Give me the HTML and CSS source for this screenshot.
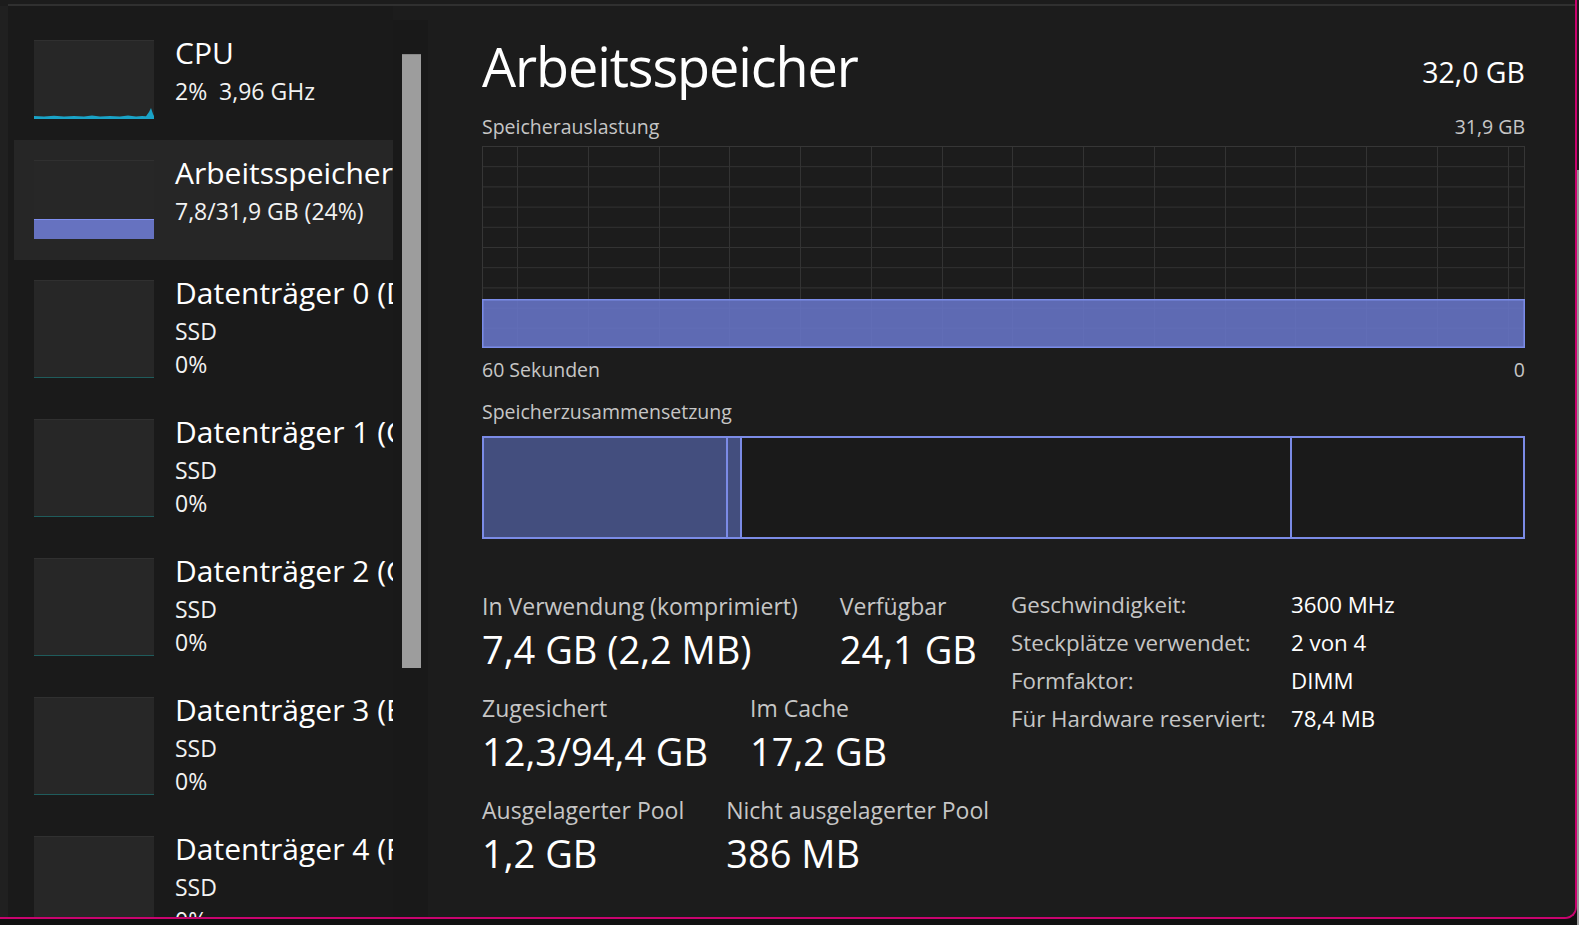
FILE: index.html
```html
<!DOCTYPE html>
<html lang="de">
<head>
<meta charset="utf-8">
<title>Task-Manager – Leistung</title>
<link rel="stylesheet" href="styles.css">
</head>
<body>
<div class="screen">
  <div class="window">
    <div class="topbar"><div class="topline"></div></div>
    <div class="body">
      <div class="leftstrip"></div>
      <nav class="sidebar">
        <div class="item item-short">
          <div class="thumb thumb-short">
            <svg class="cpu-graph" viewBox="0 0 120 79" width="120" height="79">
              <path d="M0 79 L0 76 L10 76.5 L20 75.8 L30 76.6 L40 76 L50 76.4 L58 75.4 L66 76.4 L76 76 L86 76.4 L94 75.6 L102 76.4 L108 76 L112 76.2 L115 72 L117 68 L119 74 L120 76 L120 79 Z" fill="#1aa3c7"/>
            </svg>
          </div>
          <div class="info">
            <div class="name">CPU</div>
            <div class="sub">2%&nbsp; 3,96 GHz</div>
          </div>
        </div>
        <div class="item item-short selected">
          <div class="thumb thumb-short">
            <div class="mem-fill"></div>
          </div>
          <div class="info">
            <div class="name">Arbeitsspeicher</div>
            <div class="sub">7,8/31,9 GB (24%)</div>
          </div>
        </div>
        <div class="item item-tall">
          <div class="thumb thumb-tall disk"></div>
          <div class="info">
            <div class="name">Datenträger 0 (D:)</div>
            <div class="sub">SSD</div>
            <div class="sub">0%</div>
          </div>
        </div>
        <div class="item item-tall">
          <div class="thumb thumb-tall disk"></div>
          <div class="info">
            <div class="name">Datenträger 1 (C:)</div>
            <div class="sub">SSD</div>
            <div class="sub">0%</div>
          </div>
        </div>
        <div class="item item-tall">
          <div class="thumb thumb-tall disk"></div>
          <div class="info">
            <div class="name">Datenträger 2 (G:)</div>
            <div class="sub">SSD</div>
            <div class="sub">0%</div>
          </div>
        </div>
        <div class="item item-tall">
          <div class="thumb thumb-tall disk"></div>
          <div class="info">
            <div class="name">Datenträger 3 (E:)</div>
            <div class="sub">SSD</div>
            <div class="sub">0%</div>
          </div>
        </div>
        <div class="item item-tall">
          <div class="thumb thumb-tall disk"></div>
          <div class="info">
            <div class="name">Datenträger 4 (F:)</div>
            <div class="sub">SSD</div>
            <div class="sub">0%</div>
          </div>
        </div>
      </nav>
      <div class="track"><div class="scroll-thumb"></div></div>
      <main class="main">
        <header class="header">
          <h1 class="title">Arbeitsspeicher</h1>
          <div class="total">32,0 GB</div>
        </header>
        <div class="label-row label-row-top">
          <span>Speicherauslastung</span>
          <span>31,9 GB</span>
        </div>
        <svg class="graph" viewBox="0 0 1043 202" width="1043" height="202">
          <g stroke="#333333" stroke-width="1">
            <line x1="0" y1="20.7" x2="1043" y2="20.7"/>
            <line x1="0" y1="40.9" x2="1043" y2="40.9"/>
            <line x1="0" y1="61.1" x2="1043" y2="61.1"/>
            <line x1="0" y1="81.3" x2="1043" y2="81.3"/>
            <line x1="0" y1="101.5" x2="1043" y2="101.5"/>
            <line x1="0" y1="121.7" x2="1043" y2="121.7"/>
            <line x1="0" y1="141.9" x2="1043" y2="141.9"/>
            <line x1="0" y1="162.1" x2="1043" y2="162.1"/>
            <line x1="0" y1="182.3" x2="1043" y2="182.3"/>
            <line x1="35.5" y1="0" x2="35.5" y2="202"/>
            <line x1="106.5" y1="0" x2="106.5" y2="202"/>
            <line x1="177.5" y1="0" x2="177.5" y2="202"/>
            <line x1="247.5" y1="0" x2="247.5" y2="202"/>
            <line x1="318.5" y1="0" x2="318.5" y2="202"/>
            <line x1="389.5" y1="0" x2="389.5" y2="202"/>
            <line x1="460.5" y1="0" x2="460.5" y2="202"/>
            <line x1="530.5" y1="0" x2="530.5" y2="202"/>
            <line x1="601.5" y1="0" x2="601.5" y2="202"/>
            <line x1="672.5" y1="0" x2="672.5" y2="202"/>
            <line x1="743.5" y1="0" x2="743.5" y2="202"/>
            <line x1="813.5" y1="0" x2="813.5" y2="202"/>
            <line x1="884.5" y1="0" x2="884.5" y2="202"/>
            <line x1="955.5" y1="0" x2="955.5" y2="202"/>
            <line x1="1026.5" y1="0" x2="1026.5" y2="202"/>
          </g>
          <rect x="0.5" y="0.5" width="1042" height="201" fill="none" stroke="#363636"/>
          <rect x="0" y="153" width="1043" height="49" fill="#6673c4" fill-opacity="0.9"/>
          <rect x="0.75" y="153.75" width="1041.5" height="47.5" fill="none" stroke="#7b8ce8" stroke-width="1.5"/>
        </svg>
        <div class="label-row label-row-time">
          <span>60 Sekunden</span>
          <span>0</span>
        </div>
        <div class="label-row label-row-comp">
          <span>Speicherzusammensetzung</span>
        </div>
        <div class="composition">
          <div class="seg seg-used"></div>
          <div class="seg seg-mod"></div>
          <div class="seg seg-standby"></div>
          <div class="seg seg-free"></div>
        </div>
        <section class="details">
          <div class="stats">
            <div class="stat-row">
              <div class="stat">
                <div class="stat-label">In Verwendung (komprimiert)</div>
                <div class="stat-value">7,4 GB (2,2 MB)</div>
              </div>
              <div class="stat">
                <div class="stat-label">Verfügbar</div>
                <div class="stat-value">24,1 GB</div>
              </div>
            </div>
            <div class="stat-row">
              <div class="stat">
                <div class="stat-label">Zugesichert</div>
                <div class="stat-value">12,3/94,4 GB</div>
              </div>
              <div class="stat">
                <div class="stat-label">Im Cache</div>
                <div class="stat-value">17,2 GB</div>
              </div>
            </div>
            <div class="stat-row">
              <div class="stat">
                <div class="stat-label">Ausgelagerter Pool</div>
                <div class="stat-value">1,2 GB</div>
              </div>
              <div class="stat">
                <div class="stat-label">Nicht ausgelagerter Pool</div>
                <div class="stat-value">386 MB</div>
              </div>
            </div>
          </div>
          <dl class="props">
            <div class="prop"><dt>Geschwindigkeit:</dt><dd>3600 MHz</dd></div>
            <div class="prop"><dt>Steckplätze verwendet:</dt><dd>2 von 4</dd></div>
            <div class="prop"><dt>Formfaktor:</dt><dd>DIMM</dd></div>
            <div class="prop"><dt>Für Hardware reserviert:</dt><dd>78,4 MB</dd></div>
          </dl>
        </section>
      </main>
    </div>
  </div>
  <div class="outside-right"></div>
</div>
</body>
</html>
```
FILE: styles.css
```css
* { box-sizing: border-box; }

html, body {
  margin: 0;
  padding: 0;
}

body {
  width: 1579px;
  height: 925px;
  overflow: hidden;
  background: #111111;
  font-family: "Open Sans", "Noto Sans", sans-serif;
  color: #ffffff;
}

.screen {
  display: flex;
  width: 1579px;
  height: 925px;
  align-items: flex-start;
}

.window {
  width: 1577px;
  height: 919px;
  flex: 0 0 1577px;
  background: #1c1c1c;
  border-right: 2px solid #c8046f;
  border-bottom: 2px solid #c8046f;
  border-bottom-right-radius: 12px;
  overflow: hidden;
  display: flex;
  flex-direction: column;
}

.outside-right {
  flex: 1;
  height: 925px;
  background: linear-gradient(#1c1c1c 0, #1c1c1c 170px, #9a9a9a 170px);
}

.topbar {
  height: 6px;
  flex: 0 0 6px;
  background: #1c1c1c;
  padding-left: 8px;
  padding-top: 4px;
}

.topline {
  height: 2px;
  background: #303030;
}

.body {
  flex: 1;
  display: flex;
  min-height: 0;
}

.leftstrip {
  width: 8px;
  flex: 0 0 8px;
  background: #202020;
}

.sidebar {
  width: 385px;
  flex: 0 0 385px;
  background: #1a1a1a;
  padding-top: 14px;
  overflow: hidden;
}

.item {
  width: 380px;
  margin-left: 6px;
  padding-left: 20px;
  padding-top: 12px;
  display: flex;
  align-items: flex-start;
  gap: 21px;
  overflow: hidden;
}

.item-short { height: 120px; }
.item-tall { height: 139px; }

.selected { background: #262626; }

.thumb {
  width: 120px;
  flex: 0 0 120px;
  margin-top: 8px;
  background: #272727;
  border-top: 1px solid #303030;
  position: relative;
  overflow: hidden;
}

.thumb-short { height: 79px; }
.thumb-tall { height: 98px; }

.disk { border-bottom: 1px solid #1f5c5c; }

.cpu-graph { display: block; position: absolute; left: 0; bottom: 0; }

.mem-fill {
  position: absolute;
  left: 0;
  right: 0;
  bottom: 0;
  height: 20px;
  background: #6672c0;
  border-top: 1px solid #7f8ff0;
}

.info {
  white-space: nowrap;
  min-width: 0;
}

.name {
  font-size: 30px;
  line-height: 42px;
  color: #ffffff;
}

.sub {
  font-size: 23px;
  line-height: 33px;
  color: #f2f2f2;
}

.name + .sub { margin-top: 1px; }

.track {
  width: 35px;
  flex: 0 0 35px;
  background: #191919;
  margin-top: 14px;
  padding-left: 9px;
  padding-top: 34px;
}

.scroll-thumb {
  width: 19px;
  height: 614px;
  background: #9d9d9d;
  border-top: 1px solid #888;
}

.main {
  flex: 1;
  padding: 28px 50px 0 54px;
  min-width: 0;
  background: #1c1c1c;
}

.header {
  display: flex;
  justify-content: space-between;
  align-items: flex-start;
  height: 64px;
}

.title {
  margin: 0;
  font-weight: 400;
  font-size: 54px;
  line-height: 64px;
  letter-spacing: -1.1px;
  color: #ffffff;
}

.total {
  margin-top: 21px;
  font-size: 28.5px;
  line-height: 34px;
  color: #ffffff;
}

.label-row {
  display: flex;
  justify-content: space-between;
  font-size: 19.5px;
  line-height: 24px;
  color: #c6c6c6;
}

.label-row-top { margin-top: 17px; }
.label-row-time { margin-top: 10px; }
.label-row-comp { margin-top: 18px; }

.graph {
  display: block;
  margin-top: 7px;
}

.composition {
  margin-top: 12px;
  height: 103px;
  border: 2px solid #7b8be6;
  display: flex;
}

.seg {
  height: 100%;
  border-right: 2px solid #7b8be6;
}

.seg-used { flex: 0 0 244px; background: #434e7e; }
.seg-mod { flex: 0 0 14px; background: #434e7e; }
.seg-standby { flex: 0 0 550px; background: #1a1a1a; }
.seg-free { flex: 1; border-right: 0; background: #1a1a1a; }

.details {
  margin-top: 53px;
  display: flex;
  align-items: flex-start;
}

.stats {
  width: 529px;
  flex: 0 0 529px;
}

.stat-row {
  display: flex;
  gap: 42px;
  margin-bottom: 23px;
}

.stat-label {
  font-size: 23px;
  line-height: 28px;
  color: #c6c6c6;
  white-space: nowrap;
}

.stat-value {
  margin-top: 7px;
  font-size: 38px;
  line-height: 44px;
  color: #ffffff;
  white-space: nowrap;
}

.props {
  margin: -6px 0 0 0;
}

.prop {
  display: flex;
  font-size: 22.3px;
  line-height: 38px;
  white-space: nowrap;
}

.prop dt {
  width: 280px;
  color: #c6c6c6;
}

.prop dd {
  margin: 0;
  color: #ffffff;
}
```
